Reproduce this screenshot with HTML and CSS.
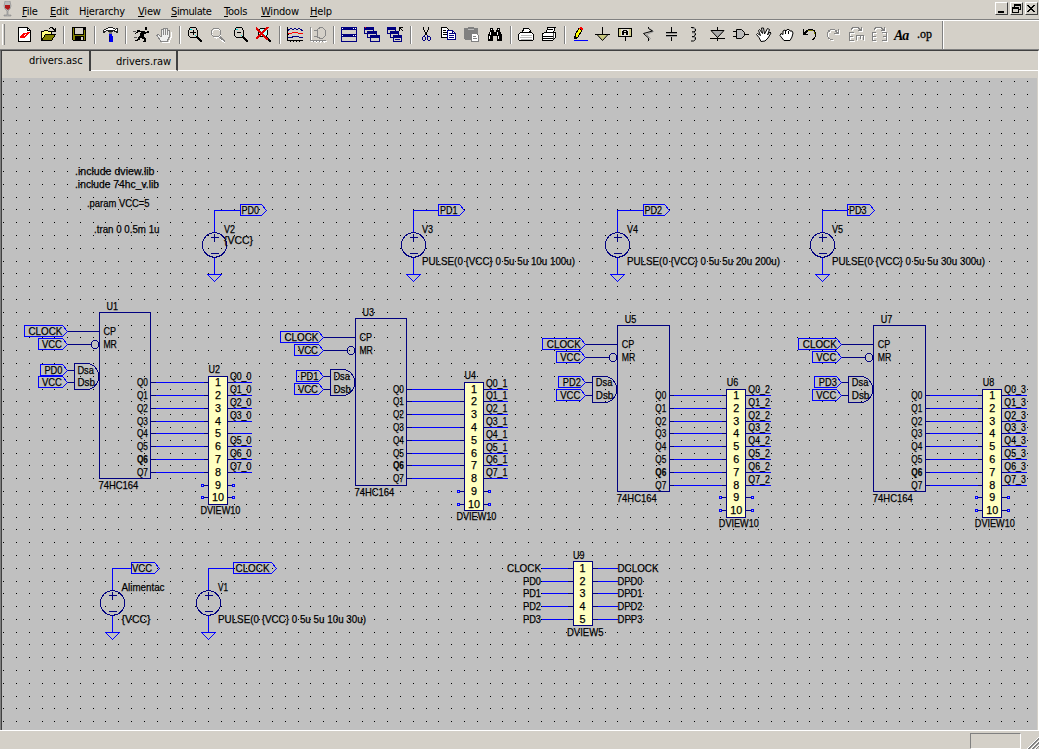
FILE: index.html
```html
<!DOCTYPE html>
<html lang="en">
<head>
<meta charset="utf-8">
<title>drivers.asc</title>
<link rel="stylesheet" href="styles.css">
</head>
<body>
<div class="app">
  <header class="menubar">
    <svg class="app-icon" width="10" height="16" viewBox="0 0 10 16"><path d="M2 0h5l1 5-1 3-2 2v4h3v1H1v-1h3v-4L2 8 1 5z" fill="#b8b8b8" stroke="#888" stroke-width=".6"/><path d="M2 4h5v3L5 9 2 7z" fill="#b01818"/></svg>
    <nav class="menus">
      <span class="menu"><u>F</u>ile</span><span class="menu"><u>E</u>dit</span><span class="menu">H<u>i</u>erarchy</span><span class="menu"><u>V</u>iew</span><span class="menu"><u>S</u>imulate</span><span class="menu"><u>T</u>ools</span><span class="menu"><u>W</u>indow</span><span class="menu"><u>H</u>elp</span>
    </nav>
    <div class="window-buttons">
      <svg class="wbtn" viewBox="1 1 11 11"><path d="M3 9h6v2H3z"/></svg>
      <svg class="wbtn" viewBox="1 1 11 11"><path d="M4 2h7v6H9V7h1V4H5v1H4zM2 5h7v6H2zM3 7v3h5V7z" fill-rule="evenodd"/></svg>
      <svg class="wbtn" viewBox="1 1 11 11"><path d="M2 3h2v1h1v1h2V4h1V3h2v1H9v1H8v1H7v1h1v1h1v1h1v1H8V9H7V8H5v1H4v1H2V9h1V8h1V7h1V6H4V5H3V4H2z"/></svg>
    </div>
  </header>

  <div class="toolbar">
    <i class="grip"></i>
    <svg class="ic" viewBox="0 0 17 17"><path d="M1.500.500h9l3 3v11h-12z" fill="#fff" stroke="#000"/><path d="M10.500.500v3h3" fill="none" stroke="#000"/><path d="M3 10l3-4h3l-2 3h2l-2 2H3zM13 5l-3 4H7l2-2H8l2-2z" fill="red"/></svg>
    <svg class="ic" viewBox="0 0 17 17"><path d="M1.500 13.500v-9h2l1-1h3l1 1h3v3" fill="#ffff80" stroke="#000"/><path d="M1.500 13.500l4-6h10l-4 6z" fill="#808000" stroke="#000"/><path d="M9 1h1V0h3v1h1v1h1V1h1v4h-4V4h2V3h-1V2h-1V1h-2v1H9z"/></svg>
    <i class="sep"></i>
    <svg class="ic" viewBox="0 0 17 17"><path d="M1 0h14v14H2l-1-1z"/><path d="M2 1h1v7h10V3h1v10h-1V9H4v4H2z" fill="#808000"/><path d="M4 1h8v6H4zM10 10h2v3h-2z" fill="#d4d0c8"/></svg>
    <i class="sep"></i>
    <svg class="ic" viewBox="0 0 17 17"><path d="M1 3h1V2h2V1h2V0h5v1h2v1h1V1h2v5h-2V5h-2V4h-1v1H6V4H4v1H3v1H1z" fill="#222"/><path d="M2 3h2V2h2V1h5v1h2v1h1V2h1v2h-2V3H4v1H2z" fill="#fff"/><path d="M7 5h3v2H7z" fill="#777"/><path d="M7 7h3v2h1v6H7V9z" fill="#0000f0"/><path d="M7 9h1v5H7z" fill="#000080"/></svg>
    <i class="sep"></i>
    <svg class="ic" viewBox="0 0 17 17"><path d="M12 0h2v3h-2zM4 3h3v1h5v1h2V4h2v2h-3v1h-2v3h1v1h1v4h-3v-1h1v-2H9v-1H7v2H5v1H2v-1h2v-1h1v-2h1V9h1V6h1V5H5v1H3v1H2V6h1V5h1z"/><path d="M0 4h3v1H0zM1 10h3v1H1z" fill="#555"/></svg>
    <svg class="ic" viewBox="0 0 17 17"><path d="M5 14.500l-4-6 1-1 3 2V2.500h2v5-6h2v6-6h2v6-4h2v7l-2 4z" fill="#eee" stroke="#888"/><path d="M6 15.500h7l2-5V5" fill="none" stroke="#fff"/></svg>
    <i class="sep"></i>
    <svg class="ic" viewBox="0 0 17 17"><path d="M3 0h6v1H3zM1 3h1v6H1zM3 10h6v1H3zM10 3h1v6h-1zM2 1h1v2H2zM9 1h1v2H9zM2 9h1v1H2zM9 9h1v1H9zM3 5h6v1H3zM5.500 3h1v5h-1z"/><path d="M10 10l5 5" stroke="#000" stroke-width="2"/><path d="M3 2h2v1H3zM8 8h1v1H8z" fill="#0dd"/></svg>
    <svg class="ic" viewBox="0 0 17 17"><circle cx="6.500" cy="6.500" r="4.500" fill="none" stroke="#fff"/><circle cx="6" cy="5.500" r="4.500" fill="none" stroke="#888"/><path d="M10 10l5 5" stroke="#888" stroke-width="2"/><path d="M10 12l5 4" stroke="#fff"/></svg>
    <svg class="ic" viewBox="0 0 17 17"><path d="M3 0h6v1H3zM1 3h1v6H1zM3 10h6v1H3zM10 3h1v6h-1zM2 1h1v2H2zM9 1h1v2H9zM2 9h1v1H2zM9 9h1v1H9zM4 5h4v1H4z"/><path d="M10 10l5 5" stroke="#000" stroke-width="2"/><path d="M3 2h2v1H3zM8 8h1v1H8z" fill="#0dd"/></svg>
    <svg class="ic" viewBox="0 0 17 17"><circle cx="7" cy="5.500" r="4.500" fill="#bff" stroke="#000"/><path d="M10 10l5 5" stroke="#000" stroke-width="2"/><path d="M0 1l12 12M12 0L0 12" stroke="#e00000" stroke-width="1.600"/></svg>
    <i class="sep"></i>
    <svg class="ic" viewBox="0 0 17 17"><path d="M0 0h1v13h15v1H0zM3 14h1v1H3zM6 14h1v1H6zM9 14h1v1H9zM12 14h1v1h-1zM0 3h2v1H0zM0 7h2v1H0z"/><path d="M1 3.500l3-2.500 2 2 2-2 2 2 2-2 4 3M1 10.500h4l1-1h5l2 1h3" fill="none" stroke="#000080"/><path d="M1 6.500h3l2-1h4l2 1h4" fill="none" stroke="red"/></svg>
    <svg class="ic" viewBox="0 0 17 17"><path d="M1.500 1v13.500H17M6 15v1M10 15v1M14 15v1" stroke="#fff" fill="none"/><path d="M.500 0v13.500H16M3.500 14v1M6.500 14v1M9.500 14v1M12.500 14v1M4 3.500h4M4 9.500h4M7.500 2v9M10 .500h2.500l3 3v5l-3 3H10l-2.500-2v-7z" stroke="#888" fill="none"/></svg>
    <i class="sep"></i>
    <svg class="ic" viewBox="0 0 17 17"><path d="M0 0h16v15H0z" fill="#000080"/><path d="M1 3h14v4H1zM1 10h14v4H1z" fill="#d4d0c8"/><path d="M1 1h1v1H1zM12 1h1v1h-1zM14 1h1v1h-1zM1 8h1v1H1zM12 8h1v1h-1zM14 8h1v1h-1z" fill="#fff"/></svg>
    <svg class="ic" viewBox="0 0 17 17"><path d="M0 0h10v7H0zM3 4h10v7H3zM6 8h10v7H6z" fill="#000080"/><path d="M1 3h8v1H3v2H1zM4 7h8v1H6v2H4zM7 11h8v3H7z" fill="#d4d0c8"/><path d="M1 0h1v1H1z" fill="red"/></svg>
    <svg class="ic" viewBox="0 0 17 17"><path d="M0 0h9v7H0zM3 4h9v7H3zM6 8h9v7H6z" fill="#000080"/><path d="M1 3h7v1H3v2H1zM4 7h7v1H6v2H4zM7 11h7v3H7z" fill="#d4d0c8"/><path d="M8 12h5v1H8z" fill="#000080"/><path d="M12 0h4v1h-3v3h-1zM13 1h1v1h-1zM14 2h1v1h-1zM15 3h1v1h-1z"/></svg>
    <i class="sep"></i>
    <svg class="ic" viewBox="0 0 17 17"><path d="M5 0h1v3H5zM10 0h1v3h-1zM6 3h1v2H6zM9 3h1v2H9zM7 5h2v3H7z"/><path d="M6 8h1v1H6zM9 8h1v1H9zM5 9h2v1H5zM9 9h3v1H9zM4 10h1v3H4zM7 10h1v3H7zM5 13h2v1H5zM9 10h1v3H9zM12 10h1v3h-1zM10 13h2v1h-2z" fill="#000080"/></svg>
    <svg class="ic" viewBox="0 0 17 17"><path d="M.500.500h5l3 3v7h-8z" fill="#fff" stroke="#000"/><path d="M2 3h3v1H2zM2 5h4v1H2zM2 7h4v1H2z"/><path d="M6.500 3.500h5l3 3v6h-8z" fill="#fff" stroke="#000080"/><path d="M8 6h3v1H8zM8 8h5v1H8zM8 10h5v1H8zM11 4h1v2h2v1h-3z" fill="#000080"/></svg>
    <svg class="ic" viewBox="0 0 17 17"><path d="M0 1h4V0h6v1h4v12H1l-1-1z" fill="#808080"/><path d="M4 2h6v1H4z" fill="#bbb"/><path d="M7.500 6.500h5l2 2v6h-7z" fill="#fff" stroke="#808080"/><path d="M9 9h3v1H9zM9 11h4v1H9z" fill="#808080"/></svg>
    <svg class="ic" viewBox="0 0 17 17"><path d="M3 1h3v2h1v2h2V3h1V1h3v3l2 4v5l-1 1h-4V9H6v5H1v-6l2-4z"/><path d="M3 5h1v3H3zM2 9h1v3H2zM10 5h1v3h-1zM11 9h1v3h-1zM4 2h1v1H4zM11 2h1v1h-1z" fill="#fff"/></svg>
    <i class="sep"></i>
    <svg class="ic" viewBox="0 0 17 17"><path d="M4.500 5.500l1-4h5l2 2-1 2zM2.500 5.500h11l2 2v5l-1 1h-13l-1-1v-5z" fill="#fff" stroke="#000"/><path d="M3 8h11v1H3zM2 10h12v1H2zM3 12h11v1H3z" fill="#bbb"/></svg>
    <svg class="ic" viewBox="0 0 17 17"><path d="M5 5.500l2-5h7l-1.500 5zM1.500 6.500l3-1h10v5l-3 3h-10z" fill="#fff" stroke="#000"/><path d="M2 9h10v1H2zM2 11h10v1H2zM7 2h5v1H7z"/><path d="M12 6h1v6h-1z" fill="#555"/></svg>
    <i class="sep"></i>
    <svg class="ic" viewBox="0 0 17 17"><path d="M3 8l4-7 3 2-4 7-3 2z" fill="#ff0" stroke="#000"/><path d="M8 0h2v1h1v2H9V2H7V1h1z" fill="red"/><path d="M2 9h2v3H2z"/><path d="M2 13h14v1H2z" fill="#00f"/></svg>
    <svg class="ic smooth" viewBox="0 0 17 17"><path d="M2 7.500h11l-5.500 6z" fill="#c8c880" stroke="#000"/><path d="M0 7.500h15M7.500 0v7" stroke="#000"/></svg>
    <svg class="ic" viewBox="0 0 17 17"><path d="M.500 1.500h13v8h-13z" fill="#d0cc88" stroke="#000"/><path d="M3 2h8v7H3z" fill="#e4e0d8"/><path d="M7 10h1v4H7zM4 8V4h1V3h4v1h1v4H8V6H6v2zM6 4v1h2V4z"/></svg>
    <svg class="ic smooth" viewBox="0 0 17 17"><path d="M8 1l4 3-7 3 4 4-3 3" transform="translate(.5 .5)" fill="none" stroke="#999"/><path d="M7.500 0v1.500l4 2.500-9 2.500 5 4.500v3" fill="none" stroke="#000"/></svg>
    <svg class="ic" viewBox="0 0 17 17"><path d="M2 5h11v1H2zM2 8h11v1H2zM7 0h1v5H7zM7 9h1v5H7z"/><path d="M2 6h11v1H2zM2 9h11v1H2z" fill="#999"/></svg>
    <svg class="ic smooth" viewBox="0 0 17 17"><path d="M4 .500h2.500l2 1.500v2l-2 1H5h1.500l2 1.500v1.500l-2 1.500H5h1.500l2 1v2l-2 1.500H4" fill="none" stroke="#000"/><path d="M5 1.500h2.500v2M5 6h2.500v2M5 10.500h2.500v2" stroke="#999" fill="none"/></svg>
    <svg class="ic smooth" viewBox="0 0 17 17"><path d="M1 3.500h13l-6.500 7zM7.500 0v3.500M0 11.500h15M7.500 10v4" fill="#aaa" stroke="#000"/></svg>
    <svg class="ic smooth" viewBox="0 0 17 17"><path d="M0 4.500h4M0 9.500h4M12 7.500h4M3.500 2.500h5l3 3v3l-3 3h-5z" fill="#bbb" stroke="#000"/></svg>
    <svg class="ic smooth" viewBox="0 0 17 17"><path d="M5 14.500l-2-4-2.500-3 1-1 3 2-2-5 1-1 3 4-1-5.500h2l1 6 3-5.500 2 1-2 5.500 2.500-3 1 1-3 5-3 3z" fill="#fff" stroke="#000"/></svg>
    <svg class="ic smooth" viewBox="0 0 17 17"><path d="M5 13.500l-4-5 1-2 2 1V4l2-1 1 1 1-1.500h2l1 1.500h2l1 2-1 4-2 3.500z" fill="#fff" stroke="#000"/><path d="M6.500 4v3M9.500 4v3" stroke="#000"/></svg>
    <svg class="ic" viewBox="0 0 17 17"><path d="M1 2h1v3h1V4h1V3h2V2h5v1h2v2h1v5h-1v2h-1v1h-2v-1h1v-1h1v-1h1V6h-1V4H6v1H5v1H4v1h2v1H1z"/><path d="M6 3h5v1H6zM12 5h1v2h-1z" fill="#808000"/></svg>
    <svg class="ic" viewBox="0 0 17 17"><g transform="translate(1 1)" fill="#fff"><path d="M14 2h-1v3h-1V3h-2V2H5v1H3v2H2v5h1v2h2v1h3v-1H5v-1H4v-1H3V5h2V3h5v2h1v1H9v1h5z"/></g><path d="M14 2h-1v3h-1V3h-2V2H5v1H3v2H2v5h1v2h2v1h3v-1H5v-1H4v-1H3V5h2V3h5v2h1v1H9v1h5z" fill="#888"/></svg>
    <svg class="ic" viewBox="0 0 17 17"><g fill="none"><path d="M3 2.500l2-2h5l3 3h-3M13.500 0v4M6 5.500H1.500v8H6M2 9.500h3M8.500 13V8.500h7V13M12 9v3" transform="translate(1 1)" stroke="#fff"/><path d="M3 2.500l2-2h5l3 3h-3M13.500 0v4M6 5.500H1.500v8H6M2 9.500h3M8.500 13V8.500h7V13M12 9v3" stroke="#808080"/></g></svg>
    <svg class="ic" viewBox="0 0 17 17"><g fill="none"><path d="M3 2.500l2-2h5l3 3h-3M13.500 0v4M5 5.500H1.500v8H5M2 9.500h3M11 5.500h4.500v8H11M12 9.500h3" transform="translate(1 1)" stroke="#fff"/><path d="M3 2.500l2-2h5l3 3h-3M13.500 0v4M5 5.500H1.500v8H5M2 9.500h3M11 5.500h4.500v8H11M12 9.500h3" stroke="#808080"/></g></svg>
    <span class="ic ic-aa">Aa</span>
    <span class="ic ic-op">.op</span>
    <i class="sep sep-end"></i>
  </div>

  <main class="workspace">
    <div class="tabs"><span class="tab tab-active">drivers.asc</span><span class="tab">drivers.raw</span><span class="tab-fill"></span></div>
    <div class="tab-foot"></div>
    <svg id="sheet" class="sheet" width="1035" height="652" viewBox="2 78 1035 652"></svg>
  </main>

  <footer class="statusbar">
    <div class="status-cell"></div>
    <svg width="13" height="13" viewBox="0 0 13 13"><path d="M1 13L13 1M5 13l8-8M9 13l4-4" stroke="#fff"/><path d="M2 13L13 2M3 13L13 3M6 13l7-7M7 13l6-6M10 13l3-3" stroke="#808080"/></svg>
  </footer>
</div>
<script src="schematic.js"></script>
</body>
</html>
```

FILE: styles.css
```css
body { margin: 0; background: #d4d0c8; }
.app { width: 1039px; height: 749px; display: flex; flex-direction: column; overflow: hidden; background: #d4d0c8; color: #000; font: 11px/14px "DejaVu Sans Condensed", "DejaVu Sans", sans-serif; }

.menubar { height: 19px; display: flex; align-items: flex-start; border-bottom: 1px solid #808080; box-sizing: content-box; }
.app-icon { margin: 1px 0 0 3px; flex: none; }
.menus { display: flex; padding: 5px 0 0 9px; flex: 1; font-size: 11px; letter-spacing: -0.2px; white-space: nowrap; }
.menu { width: 28px; flex: none; }
.menu u { text-underline-offset: 1px; text-decoration-thickness: 1px; }
.menu:nth-child(2) { width: 29px; }
.menu:nth-child(3) { width: 59px; }
.menu:nth-child(4) { width: 33px; }
.menu:nth-child(5) { width: 53px; letter-spacing: -0.4px; }
.menu:nth-child(6) { width: 37px; }
.menu:nth-child(7) { width: 49px; }
.window-buttons { display: flex; gap: 2px; padding: 2px 1px 0 0; }
.wbtn { width: 11px; height: 11px; border: 1px solid; border-color: #fff #404040 #404040 #fff; shape-rendering: crispEdges; }

.toolbar { height: 28px; display: flex; align-items: flex-start; border-top: 1px solid #fff; border-bottom: 1px solid #808080; }
.grip { width: 1px; height: 21px; margin: 3px 9px 0 2px; border-left: 1px solid #fff; border-right: 1px solid #808080; flex: none; }
.sep { width: 1px; height: 18px; margin: 5px 3px 0; border-left: 1px solid #808080; background: #fff; flex: none; }
.ic { width: 17px; height: 17px; margin: 6px 3px 0; flex: none; shape-rendering: crispEdges; }
.smooth { shape-rendering: auto; }
.ic-aa { font: italic bold 14px/17px "Liberation Serif", serif; letter-spacing: -1px; }
.ic-op { font: 12px/14px "Liberation Serif", serif; -webkit-text-stroke: 0.3px #000; }
.sep-end { height: 28px; margin: 0 0 0 5px; }

.workspace { height: 680px; flex: none; box-sizing: border-box; border-left: 1px solid #808080; border-right: 1px solid #fff; border-top: 1px solid #404040; display: flex; flex-direction: column; }
.tabs { height: 20px; display: flex; align-items: flex-start; border-left: 1px solid #404040; }
.tab { box-sizing: border-box; height: 20px; width: 87px; padding: 4px 0 0 25px; border-right: 2px solid #404040; border-bottom: 1px solid #fff; letter-spacing: -0.05px; white-space: nowrap; flex: none; }
.tab-active { width: 89px; padding: 3px 0 0 27px; border-bottom: 0; }
.tab-fill { flex: 1; height: 19px; border-bottom: 1px solid #fff; }
.tab-foot { height: 7px; border-left: 1px solid #404040; }
.sheet { display: block; border-left: 1px solid #404040; border-right: 1px solid #d4d0c8; background: #c0c0c0; flex: none; font: 11px "Liberation Sans", sans-serif; }
.sheet .dots { fill: #000; shape-rendering: crispEdges; }
.sheet .wire, .sheet .part { fill: none; stroke: #00f; stroke-width: 1; shape-rendering: crispEdges; }
.sheet .part { stroke: #000080; }
.sheet .view { fill: #ffffc0; }
.sheet text { fill: #000; stroke: #000; stroke-width: 0.25px; white-space: pre; }
.sheet .strong { font-weight: bold; }

.statusbar { height: 18px; flex: none; border-top: 1px solid #fff; display: flex; justify-content: flex-end; box-sizing: content-box; }
.status-cell { width: 49px; height: 14px; margin: 2px 5px 0 0; border: 1px solid; border-color: #808080 #fff #fff #808080; }
.statusbar svg { margin-top: 5px; }
```

FILE: schematic.js
```js
const sheet = document.getElementById('sheet');
const NS = 'http://www.w3.org/2000/svg';
const px = v => Math.floor(v) + 0.5;

function el(name, attrs, content) {
  const node = document.createElementNS(NS, name);
  for (const key in attrs) node.setAttribute(key, attrs[key]);
  if (content !== undefined) node.textContent = content;
  sheet.appendChild(node);
}
const wire = d => el('path', { class: 'wire', d });
const part = (d, extra = '') => el('path', { class: 'part ' + extra, d });
const label = (x, y, width, s, cls = '') =>
  el('text', { x, y, textLength: width, lengthAdjust: 'spacingAndGlyphs', class: cls }, s);
const line = (x1, x2, y) => `M${px(x1)} ${px(y)}H${px(x2) + 0.5}`;

// Grid
let dots = '';
for (let y = 81.8; y < 729; y += 12.8)
  for (let x = 3.6; x < 1037; x += 12.8)
    dots += `M${Math.floor(x)} ${Math.floor(y)}h1v1h-1z`;
el('path', { class: 'dots', d: dots });

// Net flag with its tip pointing right
function flag(left, tip, y) {
  wire(`M${px(tip - 5)} ${px(y - 6)}H${px(left)}V${px(y + 5)}H${px(tip - 5)}L${px(tip)} ${px(y)}Z`);
}

// Voltage source with ground below and a flagged net above
function source(x, y, left, tip, net, nx, nw) {
  wire(`M${px(x)} ${px(y + 22)}V${px(y)}H${px(left)}M${px(x)} ${px(y + 47)}V${px(y + 64)}` +
    `M${px(x - 7)} ${px(y + 64)}h14l-7 7z`);
  flag(left, tip, y);
  el('circle', { class: 'part', cx: px(x), cy: y + 35, r: 12.2 });
  part(`M${px(x - 4)} ${px(y + 27)}h8M${px(x)} ${px(y + 23)}v8M${px(x - 4)} ${px(y + 43)}h8`);
  label(nx, y + 4, nw, net);
}

label(75, 175, 79.5, '.include dview.lib');
label(75, 188, 84, '.include 74hc_v.lib');
label(87, 207, 62.5, '.param VCC=5');
label(94, 233, 65.5, '.tran 0 0.5m 1u');

source(214, 210, 240, 266, 'PD0', 241.5, 17.5);
label(224, 233, 11, 'V2');
label(224, 244, 29, '{VCC}');
source(413, 210, 438, 464, 'PD1', 440, 17.5);
label(422, 233, 11, 'V3');
label(422, 265, 153, 'PULSE(0 {VCC} 0 5u 5u 10u 100u)');
source(617, 210, 643, 669, 'PD2', 644.5, 17.5);
label(627, 233, 11, 'V4');
label(627, 265, 153, 'PULSE(0 {VCC} 0 5u 5u 20u 200u)');
source(822, 210, 847, 874, 'PD3', 849, 17.5);
label(832, 233, 11, 'V5');
label(832, 265, 153, 'PULSE(0 {VCC} 0 5u 5u 30u 300u)');
source(112, 568, 131, 159, 'VCC', 132, 20);
label(121.5, 591, 43, 'Alimentac');
label(121.5, 623, 29, '{VCC}');
source(208, 568, 233, 276, 'CLOCK', 235.5, 34);
label(218, 591, 10, 'V1');
label(218, 623, 148, 'PULSE(0 {VCC} 0 5u 5u 10u 30u)');

// Row offsets from the top of a shift register
const ROWS = [70.4, 83.2, 96, 108.7, 121.5, 134.4, 147.1, 160, 172.7, 185.5];
const STAGES = [[0, 0], [256, 6.4], [518.4, 12.8], [774.4, 12.8]];

STAGES.forEach(([dx, dy], n) => {
  const X = v => v + 0.4 + dx;
  const Y = v => 312.4 + dy + v;
  const T = v => Math.floor(v);

  part(`M${px(X(99))} ${px(Y(0))}H${px(X(150.2))}V${px(Y(166.4))}H${px(X(99))}Z`);
  [[24, 19.2], [38, 32], [40, 57.6], [38, 70.4]].forEach(([left, y]) => flag(X(left), X(67), T(Y(y))));
  part(line(X(67), X(99), Y(19.2)) + line(X(67), X(91), Y(32)) +
    line(X(67), X(74), Y(57.6)) + line(X(67), X(74), Y(70.4)));
  el('circle', { class: 'part', cx: px(X(95)) - 0.5, cy: px(Y(32)), r: 4 });
  const top = px(Y(51.2)), bottom = px(Y(76.8));
  part(`M${px(X(86))} ${top}H${px(X(74))}V${bottom}H${px(X(86))}Q${px(X(94))} ${bottom} ${px(X(98))} ${bottom - 9}V${top + 9}Q${px(X(94))} ${top} ${px(X(86))} ${top}`);

  label(X(28), T(Y(19.2)) + 4, 34, 'CLOCK');
  label(X(41.5), T(Y(32)) + 4, 20, 'VCC');
  label(X(44), T(Y(57.6)) + 4, 18, 'PD' + n);
  label(X(41.5), T(Y(70.4)) + 4, 20, 'VCC');
  label(X(103), T(Y(19.2)) + 4, 12.5, 'CP');
  label(X(103), T(Y(32)) + 4, 13.5, 'MR');
  label(X(77), T(Y(57.6)) + 4, 16.5, 'Dsa');
  label(X(77), T(Y(70.4)) + 4, 17.5, 'Dsb');
  label(X(106), T(Y(0)) - 2, 11.5, 'U' + (2 * n + 1));
  label(X(98), T(Y(166.4)) + 11, 40, '74HC164');

  const l = px(X(208)), r = px(X(227)), t = px(Y(64)), b = px(Y(192));
  part(`M${l} ${t}H${r}V${b}H${l}Z`, 'view');
  label(X(208), T(Y(64)) - 3, 11.5, 'U' + (2 * n + 2));
  label(X(200), T(Y(192)) + 10, 40, 'DVIEW10');

  ROWS.forEach((row, i) => {
    const y = T(Y(row));
    label(X(i === 9 ? 211.5 : 214.5), y + 4, i === 9 ? 12 : 6, String(i + 1));
    if (i < 8) {
      wire(line(X(155), X(203), y) + line(X(232), X(251.5), y));
      part(line(X(150), X(155), y) + line(X(203), X(208), y) + line(X(227), X(232), y));
      label(X(136.5), y + 4, 11, 'Q' + i, i === 6 ? 'strong' : '');
      if (!(n === 0 && i === 4)) label(X(229.5), y - 2.5, 21.5, `Q${i}_${n}`);
    } else {
      part(line(X(203), X(208), y) + line(X(227), X(232), y));
      wire(`M${px(X(201))} ${y - 0.5}h2v2h-2zM${px(X(232.5))} ${y - 0.5}h2v2h-2z`);
    }
  });
});

// Five-channel viewer
part('M573.5 561.5H592.5V625.5H573.5Z', 'view');
label(573, 559, 11.5, 'U9');
label(567, 636, 36.5, 'DVIEW5');
[['CLOCK', 'DCLOCK', 568], ['PD0', 'DPD0', 581], ['PD1', 'DPD1', 593], ['PD2', 'DPD2', 606], ['PD3', 'DPP3', 619]]
  .forEach(([a, z, y], i) => {
    wire(line(541, 567, y) + line(597, 617, y));
    part(line(567, 573, y) + line(592, 597, y));
    label(i ? 523 : 507, y + 4, i ? 18 : 34, a);
    label(617.5, y + 4, i ? 25 : 41, z);
    label(579.5, y + 4, 6, String(i + 1));
  });
```
